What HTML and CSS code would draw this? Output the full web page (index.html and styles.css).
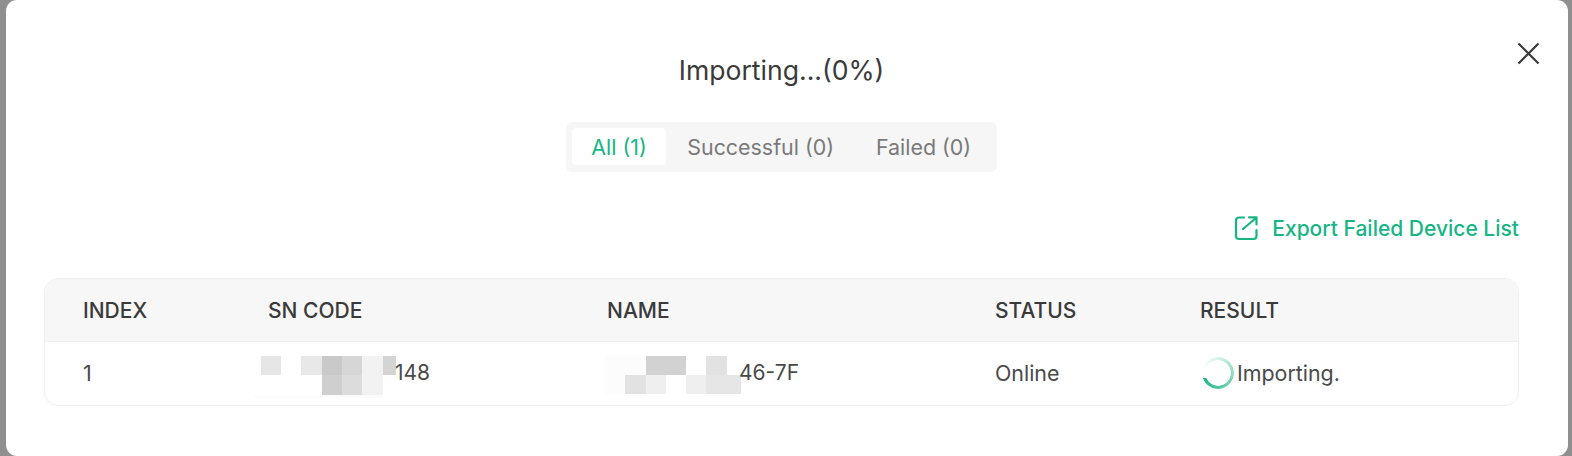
FILE: index.html
```html
<!DOCTYPE html>
<html lang="en">
<head>
<meta charset="utf-8">
<title>Importing</title>
<link rel="stylesheet" href="styles.css">
</head>
<body>
<div class="modal">
  <button class="close" aria-label="Close">
    <svg width="23" height="23" viewBox="0 0 23 23"><path d="M1.5 1.5 21.5 21.5M21.5 1.5 1.5 21.5" fill="none" stroke="#3a3a3a" stroke-width="2.2"/></svg>
  </button>
  <h1 class="title">Importing...(0%)</h1>
  <div class="tabs-row">
    <div class="tabs">
      <span class="tab active">All (1)</span>
      <span class="tab">Successful (0)</span>
      <span class="tab last">Failed (0)</span>
    </div>
  </div>
  <div class="export-row">
    <a class="export">
      <svg width="24" height="26" viewBox="0 0 24 26" fill="none" stroke="#17b584" stroke-width="2.2" stroke-linecap="round" stroke-linejoin="round"><path d="M10 2.500H5a3 3 0 0 0-3 3V21a3 3 0 0 0 3 3h14.500a3 3 0 0 0 3-3v-6"/><path d="M15 2.300h7.500v7.200M22 3 9 14"/></svg>
      <span>Export Failed Device List</span>
    </a>
  </div>
  <div class="table">
    <div class="row head">
      <span>INDEX</span><span>SN CODE</span><span>NAME</span><span>STATUS</span><span>RESULT</span>
    </div>
    <div class="row body">
      <span>1</span>
      <span class="masked sn">
        <svg class="mosaic" width="142" height="44" viewBox="0 0 142 44">
          <rect x="7" y="2" width="20" height="19" fill="#e6e6e6"/>
          <rect x="47" y="2" width="21" height="19" fill="#e8e8e8"/>
          <rect x="68" y="2" width="20" height="19" fill="#c9c9c9"/>
          <rect x="88" y="2" width="20" height="19" fill="#d6d6d6"/>
          <rect x="108" y="2" width="21" height="19" fill="#f2f2f2"/>
          <rect x="129" y="2" width="13" height="19" fill="#d4d4d4"/>
          <rect x="68" y="21" width="20" height="20" fill="#cfcfcf"/>
          <rect x="88" y="21" width="20" height="20" fill="#dcdcdc"/>
          <rect x="108" y="21" width="21" height="20" fill="#f2f2f2"/>
          <rect x="1" y="41" width="128" height="3" fill="#fbfbfb"/>
        </svg>
        <span class="tail">148</span>
      </span>
      <span class="masked nm">
        <svg class="mosaic" width="136" height="40" viewBox="0 0 136 40">
          <rect x="0" y="2" width="41" height="19" fill="#fcfcfc"/>
          <rect x="41" y="2" width="40" height="19" fill="#d2d2d2"/>
          <rect x="101" y="2" width="21" height="19" fill="#e2e2e2"/>
          <rect x="0" y="21" width="20" height="19" fill="#fcfcfc"/>
          <rect x="20" y="21" width="21" height="19" fill="#e2e2e2"/>
          <rect x="41" y="21" width="20" height="19" fill="#efefef"/>
          <rect x="81" y="21" width="20" height="19" fill="#efefef"/>
          <rect x="101" y="21" width="21" height="19" fill="#e6e6e6"/>
          <rect x="122" y="21" width="14" height="19" fill="#e6e6e6"/>
        </svg>
        <span class="tail">46-7F</span>
      </span>
      <span>Online</span>
      <span class="result"><i class="spinner"></i>Importing.</span>
    </div>
  </div>
</div>
</body>
</html>
```

FILE: styles.css
```css
* { box-sizing: border-box; }
html, body { margin: 0; height: 100%; }
body {
  background: #8f8f8f;
  overflow: hidden;
  font-family: Inter, "Noto Sans", sans-serif;
  color: #4a4a4a;
}
.modal {
  position: relative;
  margin: 0 4px 0 6px;
  height: 456px;
  background: #fff;
  border-radius: 11px;
  padding: 53px 49px 0 38px;
  display: flex;
  flex-direction: column;
}
.close {
  position: absolute;
  top: 42px;
  right: 28px;
  width: 23px;
  height: 23px;
  padding: 0;
  border: 0;
  background: none;
  display: flex;
}
.title {
  margin: 0;
  height: 34px;
  line-height: 34px;
  font-size: 26.6px;
  font-weight: 400;
  color: #3a3a3a;
  text-align: center;
}
.tabs-row {
  margin-top: 35px;
  display: flex;
  justify-content: center;
}
.tabs {
  display: flex;
  height: 50px;
  padding: 6px 6px 7px;
  background: #f6f6f6;
  border-radius: 6px;
}
.tab {
  display: flex;
  align-items: center;
  padding: 0 21px;
  font-size: 21.4px;
  color: #7a7a7a;
  border-radius: 4px;
}
.tab.active {
  background: #fff;
  color: #17b584;
  padding: 0 19.5px;
}
.tab.last { padding-right: 20px; }
.export-row {
  margin-top: 43px;
  display: flex;
  justify-content: flex-end;
}
.export {
  display: flex;
  align-items: center;
  gap: 14px;
  font-size: 21px;
  font-weight: 500;
  color: #17b584;
}
.table {
  margin-top: 37px;
  border: 1.5px solid #efefef;
  border-radius: 14px;
  overflow: hidden;
  width: 1475px;
}
.row {
  display: grid;
  grid-template-columns: 185px 339px 388px 205px 1fr;
  padding-left: 38px;
  align-items: center;
}
.head {
  height: 63px;
  padding-top: 1px;
  background: #f7f7f7;
  border-bottom: 1.5px solid #efefef;
  font-size: 21px;
  font-weight: 500;
  color: #3a3a3a;
}
.body {
  height: 63px;
  padding-bottom: 2px;
  font-size: 21.4px;
}
.masked {
  display: flex;
  align-items: center;
  position: relative;
}
.tail { position: relative; font-size: 21px; }
.sn .tail { margin-left: 127px; }
.nm .tail { margin-left: 132px; }
.mosaic { position: absolute; top: -6px; }
.sn .mosaic { left: -14px; }
.nm .mosaic { left: -2px; }
.result { display: flex; align-items: center; }
.spinner {
  width: 32px;
  height: 32px;
  margin-left: 2px;
  margin-right: 3px;
  border-radius: 50%;
  background: conic-gradient(from 250deg, rgba(23,181,132,0) 0deg, rgba(23,181,132,0) 40deg, rgba(23,181,132,.18) 110deg, #17b584 360deg);
  -webkit-mask: radial-gradient(closest-side, transparent 12.5px, #000 13px);
  mask: radial-gradient(closest-side, transparent 12.5px, #000 13px);
}
```
